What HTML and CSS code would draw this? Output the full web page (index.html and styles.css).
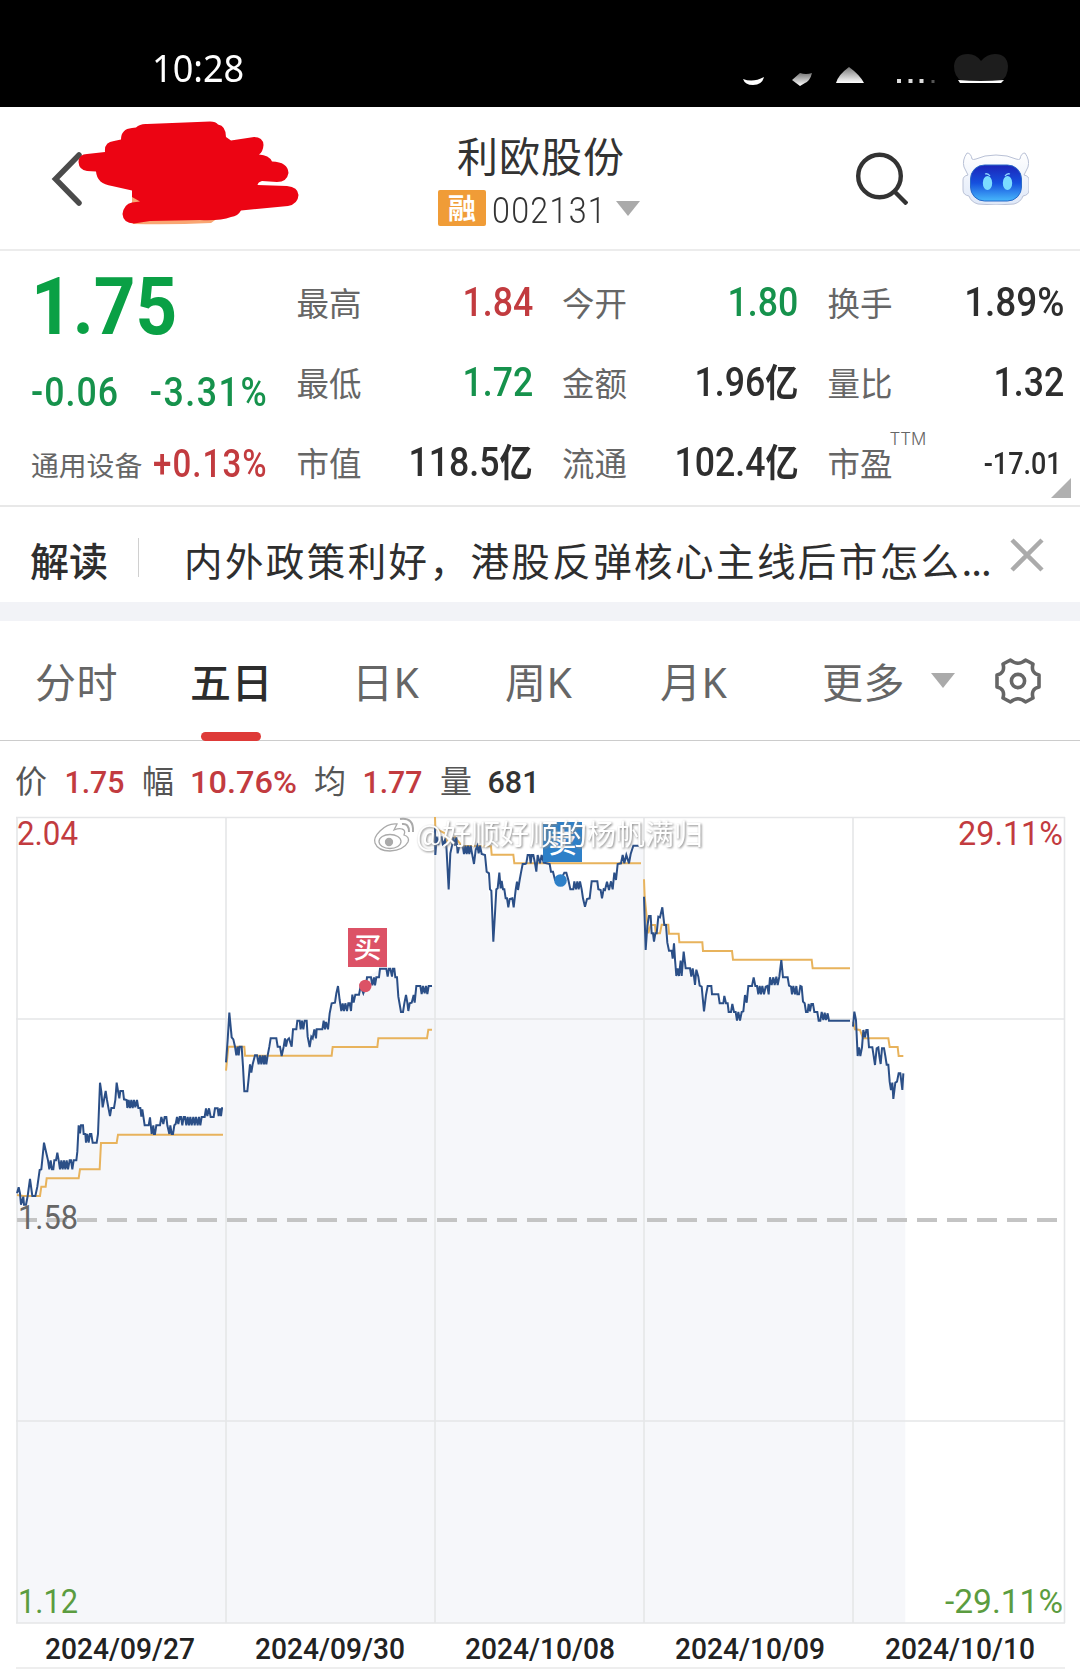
FILE: index.html
```html
<!DOCTYPE html>
<html lang="zh-CN">
<head>
<meta charset="utf-8">
<title>利欧股份 002131</title>
<link rel="stylesheet" href="styles.css">
</head>
<body>
<div class="status">
  <span class="clock">10:28</span>
  <svg class="status-icons" width="280" height="40" viewBox="728 50 280 40">
    <defs><linearGradient id="fade" x1="0" y1="0" x2="0" y2="1"><stop offset="0" stop-color="#777"/><stop offset="1" stop-color="#fff"/></linearGradient></defs>
    <path d="M743 79q10 4 21-2q-2 8-11 8q-8 0-10-6z" fill="#fff"/>
    <path d="M792 80l8-7q6 2 12 0q-2 8-7 10l-5 3z" fill="url(#fade)"/>
    <path d="M836 83q2-8 13-16q11 8 15 16z" fill="url(#fade)"/>
    <path d="M897 79h4v4h-4zM908.500 79h4v4h-4zM919.500 79h4v4h-4z" fill="#ddd"/>
    <path d="M931.500 80h3v3h-3z" fill="#555"/>
    <path d="M954 66q1-12 14-12q8 0 13 7q6-7 14-7q12 0 13 12q0 12-8 15h-38q-8-4-8-15z" fill="#1d1d1d"/>
    <path d="M958 80q22 2 46 0l-3 3h-41z" fill="#fff"/>
  </svg>
</div>

<header class="header">
  <svg class="back" width="250" height="110" viewBox="50 118 250 110">
    <path d="M79 155L55.500 179L79 203" fill="none" stroke="#4b4b4b" stroke-width="5.500" stroke-linecap="round"/>
    <path d="M132 192l16 14l-16-2zM130 218h88l-7 5q-40 2-78 1z" fill="#f9a673"/>
    <path d="M78.500 162Q79 154 87 154L105 152Q104 142 114 141L121 139.500Q121 129 132 128L136 127.500Q140 123.500 147 124L185 122.500L210 121.500Q216 121.500 218 124.500Q226 126 226 137L231 140.500L254 137Q263 137 263.500 145Q263 152 259 154.500Q269 155 272 161.500Q288 162 288.500 173Q287 182 277 182L262 181Q258 182 257.500 185L287 186Q298 187 298.500 195Q298 204 288 206L241 210.500Q238 216 231 217Q220 221 200 220L150 221L134 223.500Q123 223 122.500 214Q124 204 132 202.500L140 201.500L132 197V190.500L112 186Q97 184 96 171.500L87 171Q79 170 78.500 162Z" fill="#ec0413"/>
  </svg>
  <div class="stock">
    <div class="stock-name">利欧股份</div>
    <div class="stock-code"><span class="badge">融</span><span class="code">002131</span><i class="caret"></i></div>
  </div>
  <div class="actions">
    <svg width="56" height="56" viewBox="852 149 56 56"><circle cx="879.500" cy="176" r="21.300" fill="none" stroke="#333" stroke-width="4.400"/><path d="M894 191l13 13" stroke="#333" stroke-width="4.400"/></svg>
    <svg width="68" height="56" viewBox="960 149 68 56">
      <defs>
        <linearGradient id="face" x1="0" y1="0" x2="0" y2="1"><stop offset="0" stop-color="#1c24b8"/><stop offset=".5" stop-color="#1550de"/><stop offset="1" stop-color="#47b8fb"/></linearGradient>
        <linearGradient id="shell" x1="0" y1="0" x2="0" y2="1"><stop offset="0" stop-color="#fff"/><stop offset="1" stop-color="#dfe8f8"/></linearGradient>
      </defs>
      <path d="M966 153q4 0 5 6q1 1 4 0q8-4 20-4t20 4q3 1 4 0q1-6 5-6q5 7 3 14l-4 8q5 1 5 5v10q0 5-6 6q-2 6-9 8q-18 2-36 0q-7-2-9-8q-6-1-6-6v-10q0-4 5-5l-4-8q-2-7 3-14z" fill="url(#shell)" stroke="#b9c1d6"/>
      <rect x="969.500" y="165" width="51" height="36" rx="14" fill="url(#face)" stroke="#2869c9"/>
      <ellipse cx="986.500" cy="183" rx="4.700" ry="7" fill="#7bdcff"/><ellipse cx="1006.500" cy="183" rx="4.700" ry="7" fill="#7bdcff"/>
      <path d="M984 174q3-1 5 2M1004 176q2-3 5-2" fill="none" stroke="#8fd6ff" stroke-width="1.300"/>
    </svg>
  </div>
</header>

<section class="quote">
  <div class="col main down">
    <div class="price"><b class="num">1.75</b></div>
    <div class="change"><span class="num left">-0.06</span><span class="num wide">-3.31%</span></div>
    <div class="sector"><span>通用设备</span><span class="num up">+0.13%</span></div>
  </div>
  <div class="col">
    <div class="cell"><span>最高</span><span class="num up">1.84</span></div>
    <div class="cell"><span>最低</span><span class="num down">1.72</span></div>
    <div class="cell"><span>市值</span><span class="num">118.5<em>亿</em></span></div>
  </div>
  <div class="col">
    <div class="cell"><span>今开</span><span class="num down">1.80</span></div>
    <div class="cell"><span>金额</span><span class="num">1.96<em>亿</em></span></div>
    <div class="cell"><span>流通</span><span class="num">102.4<em>亿</em></span></div>
  </div>
  <div class="col">
    <div class="cell"><span>换手</span><span class="num percent">1.89%</span></div>
    <div class="cell"><span>量比</span><span class="num">1.32</span></div>
    <div class="cell pe"><span>市盈<sup>TTM</sup></span><span class="num small">-17.01</span></div>
  </div>
  <i class="corner"></i>
</section>

<section class="news">
  <b>解读</b>
  <span class="news-text">内外政策利好，港股反弹核心主线后市怎么<span class="dots">...</span></span>
  <svg width="34" height="34" viewBox="0 0 34 34"><path d="M2 2l30 30M32 2L2 32" stroke="#ababab" stroke-width="4.500"/></svg>
</section>

<nav class="tabs">
  <span>分时</span>
  <span class="active">五日</span>
  <span>日<i>K</i></span>
  <span>周<i>K</i></span>
  <span>月<i>K</i></span>
  <span class="more">更多</span>
  <i class="caret"></i>
  <svg class="gear" width="48" height="48" viewBox="-24 -24 48 48" fill="none" stroke="#666" stroke-width="3.600" stroke-linejoin="round">
    <path d="M-7.500 -21Q0 -14.500 7.500 -21L15 -17Q12.500 -8 21 -6V6Q12.500 8 15 17L7.500 21Q0 14.500 -7.500 21L-15 17Q-12.500 8 -21 6V-6Q-12.500 -8 -15 -17Z"/><circle r="6.600"/>
  </svg>
</nav>

<svg class="chart" width="1080" height="928" viewBox="0 741 1080 928">
  <g class="info">
    <text class="cn" x="15" y="793">价</text><text class="up" x="64.500" y="793" textLength="60" lengthAdjust="spacingAndGlyphs">1.75</text>
    <text class="cn" x="142" y="793">幅</text><text class="up" x="190" y="793" textLength="107" lengthAdjust="spacingAndGlyphs">10.76%</text>
    <text class="cn" x="314" y="793">均</text><text class="up" x="362.500" y="793" textLength="60" lengthAdjust="spacingAndGlyphs">1.77</text>
    <text class="cn" x="440" y="793">量</text><text class="vol" x="487.500" y="793" textLength="52" lengthAdjust="spacingAndGlyphs">681</text>
  </g>

  <!-- shaded area under the price line, one block per trading day -->
  <g class="area">
    <path transform="translate(0 980) scale(.33333)" d="M51 1929V640L56 622L63 674H78L90 597L97 648H106L119 570L132 488L148 568L172 541L229 541L236 436H249L258 488H290L300 308L308 382L317 333L330 408L342 384L350 308L358 333H369L380 360H411L434 436L455 462L484 411H499L508 462H519L531 411H614L618 385H678V1929Z"/>
    <path transform="translate(215 900) scale(.33333)" d="M33 2169V487L43 338L60 440H80L88 574H97L105 493L120 466H158L167 415H184L200 468L217 415H230L234 388L247 362H275L284 441L298 388H339L350 310L369 258L379 333H408L432 284L456 232L495 206H538L546 232L558 336H564L577 285L590 308L604 258H660V2169Z"/>
    <path transform="translate(425 800) scale(.33333)" d="M30 2469V137H60L71 268L81 137H170L185 215L205 425L223 218L250 322H266L276 245L293 192L308 165H350L378 215L405 243L424 218L436 268H470L480 320H486L500 244H517L531 295L558 244L568 218L593 165L625 137H657V2469Z"/>
    <path transform="translate(635 800) scale(.33333)" d="M27 2469V290L32 450L42 348L57 425L82 322L102 452L124 528L146 455L152 505H173L200 560L207 634L218 558H229L254 610H278L306 662H315L340 558H356L370 583H401L439 480L444 532H458L471 583L500 560L513 636H547L560 662H655L658 635L668 768L685 690H698L702 742L720 795L747 745L760 794L775 897L791 820H811V2469Z"/>
  </g>

  <g class="grid">
    <path d="M16 817.500H1065M16 1019H1065M16 1421H1065M16 1623H1065M17 817V1623M226 817V1623M435 817V1623M644 817V1623M853 817V1623M1064.500 817V1623"/>
    <path class="foot" d="M16 1668H1065"/>
  </g>
  <path class="base" d="M17 1220H1060"/>

  <g class="avg">
    <polyline transform="translate(0 980) scale(.33333)" points="51,645 70,648 120,648 124,620 137,620 140,595 236,595 240,568 299,568 303,489 350,489 354,464 669,464"/>
    <polyline transform="translate(215 900) scale(.33333)" points="33,512 40,440 88,440 90,467 350,467 353,441 487,441 490,415 636,415 640,389 651,389"/>
    <polyline transform="translate(425 800) scale(.33333)" points="30,51 31,85 60,100 65,125 90,112 110,137 198,139 200,164 265,164 268,190 648,190"/>
    <polyline transform="translate(635 800) scale(.33333)" points="27,238 29,290 40,400 47,375 60,375 62,400 75,400 80,374 100,374 102,401 131,401 133,427 202,427 204,453 291,453 294,479 530,479 533,505 645,505"/>
    <polyline transform="translate(635 800) scale(.33333)" points="654,665 660,688 675,690 684,715 760,715 764,741 788,741 791,768 805,768"/>
  </g>

  <g class="line">
    <polyline transform="translate(0 980) scale(.33333)" points="51,640 56,622 60,640 63,674 70,650 72,674 78,674 83,648 90,597 97,648 106,648 112,620 119,570 124,568 132,488 138,515 144,541 148,568 152,541 156,568 160,568 163,541 168,541 172,518 176,541 180,568 184,541 188,568 192,541 196,568 200,541 204,568 209,541 213,541 217,568 221,541 229,541 232,515 236,436 240,460 243,436 249,436 251,462 256,462 258,488 262,462 266,488 270,462 274,462 278,488 290,488 294,462 300,308 304,335 308,382 312,360 317,333 321,360 325,382 330,408 334,384 342,384 346,360 350,308 354,333 358,355 361,333 369,333 372,358 380,360 382,384 386,360 390,384 394,360 398,384 402,360 406,382 411,360 415,384 421,384 424,410 427,388 434,436 446,436 450,412 455,462 460,436 462,462 465,462 469,436 480,436 484,411 490,432 494,411 499,411 502,436 508,462 511,436 515,462 519,462 523,436 527,432 531,411 535,432 539,411 543,411 547,436 551,411 555,411 559,436 563,411 567,436 571,411 575,436 580,411 584,436 588,411 593,436 597,411 601,436 605,411 614,411 618,385 622,408 627,385 632,411 641,411 645,385 653,385 656,408 660,385 663,408 666,385 669,385"/>
    <polyline transform="translate(215 900) scale(.33333)" points="33,487 38,420 43,338 50,412 55,418 60,440 64,466 68,440 71,466 74,440 80,440 84,500 88,574 97,574 101,535 105,493 109,518 113,493 120,466 126,466 131,493 135,466 139,493 143,466 147,493 150,466 154,493 158,466 163,440 167,415 184,415 188,440 195,440 200,468 206,440 210,415 213,440 217,420 222,415 230,440 234,388 244,388 247,362 254,362 257,388 261,362 265,388 269,362 275,362 278,410 284,441 289,410 293,415 298,388 303,415 305,388 322,388 326,362 330,388 333,366 339,388 344,340 350,310 360,308 364,280 369,258 374,300 379,333 383,310 387,333 391,310 396,333 400,310 404,310 408,333 412,284 416,308 421,284 432,284 437,258 445,280 453,258 456,232 468,232 472,256 477,232 480,256 484,232 492,232 495,206 514,206 518,230 522,206 526,206 531,230 534,206 538,206 541,232 546,232 550,290 558,336 564,336 568,310 573,285 577,308 580,333 584,310 590,308 596,285 599,308 604,258 616,258 620,282 624,258 629,280 633,258 637,282 641,258 651,258"/>
    <polyline transform="translate(425 800) scale(.33333)" points="30,80 31,165 35,110 40,135 44,112 50,112 54,137 60,120 64,137 71,268 76,160 81,137 85,112 90,137 94,112 98,160 103,137 113,137 117,162 121,137 125,162 129,137 133,162 137,137 141,160 147,192 152,150 157,137 161,160 165,137 170,162 180,165 185,215 192,220 195,268 199,272 205,425 210,340 214,268 218,265 223,218 227,265 230,243 234,268 238,268 242,295 246,295 250,322 254,297 262,295 266,322 272,270 276,245 279,270 284,240 288,218 293,192 300,192 304,190 308,165 314,165 317,190 320,165 325,165 330,190 334,215 338,165 345,190 350,165 356,188 365,190 374,192 378,215 384,215 390,240 405,243 412,230 418,218 424,218 430,240 436,268 445,268 448,244 453,268 457,244 461,268 465,244 470,268 474,295 480,320 486,297 494,295 500,244 517,244 520,268 527,270 531,295 536,268 540,270 546,245 552,270 558,244 563,268 568,218 573,240 578,192 588,190 593,165 598,190 604,165 612,190 617,162 625,137 648,137"/>
    <polyline transform="translate(635 800) scale(.33333)" points="27,290 32,450 37,378 42,348 47,348 50,400 54,400 57,425 61,400 65,400 70,350 75,352 82,322 88,375 93,375 97,428 102,452 110,452 113,476 117,430 120,478 124,528 128,505 132,528 137,482 140,528 146,455 152,505 165,505 169,530 173,505 177,530 180,555 184,509 190,530 194,557 200,560 207,634 213,585 218,558 229,558 231,583 250,583 254,610 265,610 268,588 273,610 278,610 281,636 288,636 292,612 297,636 302,636 306,662 310,636 315,662 320,636 325,634 330,585 335,608 340,558 351,558 356,532 361,558 366,558 370,583 374,558 378,583 382,558 387,583 392,560 397,558 401,583 405,532 410,555 415,532 419,555 424,530 428,555 433,530 439,480 444,532 458,532 462,557 468,560 471,583 475,558 480,583 484,558 487,583 492,583 496,558 500,560 504,605 509,610 513,636 518,636 521,612 525,634 529,612 534,612 538,636 547,636 551,662 556,662 560,636 565,660 569,638 573,660 578,640 582,662 645,662"/>
    <polyline transform="translate(635 800) scale(.33333)" points="654,680 658,635 663,660 668,768 672,742 676,768 681,742 685,690 690,712 694,690 698,690 702,742 712,742 716,768 720,795 725,745 730,742 733,768 737,792 741,745 747,745 751,768 755,794 760,794 764,845 768,870 772,848 775,897 781,848 786,845 791,820 796,820 799,845 802,870 805,820"/>
  </g>

  <g class="axis">
    <text class="up" x="17" y="845" textLength="61" lengthAdjust="spacingAndGlyphs">2.04</text>
    <text class="up" x="958" y="845" textLength="105" lengthAdjust="spacingAndGlyphs">29.11%</text>
    <text class="mid" x="18" y="1229" textLength="60" lengthAdjust="spacingAndGlyphs">1.58</text>
    <text class="low" x="18" y="1613" textLength="60" lengthAdjust="spacingAndGlyphs">1.12</text>
    <text class="low" x="945" y="1613" textLength="118" lengthAdjust="spacingAndGlyphs">-29.11%</text>
  </g>

  <rect x="348" y="928" width="39" height="39" fill="#dc5266"/>
  <text class="mark" x="367.500" y="958" text-anchor="middle">买</text>
  <circle cx="365.300" cy="986" r="6.200" fill="#dc5266"/>
  <rect x="543" y="822" width="39" height="40" fill="#2e80c8"/>
  <text class="mark" x="562.500" y="853" text-anchor="middle">卖</text>
  <circle cx="560.500" cy="880.500" r="6.300" fill="#2e80c8"/>

  <g class="watermark">
    <g fill="#fff" stroke="#aaa" stroke-width="1.300">
      <path d="M397 824q-9-1-17 7q-7 7-5 12q3 8 15 8q14-1 18-9q2-5-4-7q2-5-2-6q-3-1-8 1q2-4 3-6z"/>
      <ellipse cx="390" cy="841.500" rx="11" ry="7"/>
      <circle cx="389" cy="842" r="3.500" fill="#aaa"/>
      <path d="M402 824q7-1 7 8M400 819q14-2 13 13" fill="none" stroke-width="2"/>
    </g>
    <text x="416" y="845" textLength="287" lengthAdjust="spacingAndGlyphs">@好顺好顺的杨帆满归</text>
  </g>

  <g class="dates">
    <text x="45" y="1659" textLength="150" lengthAdjust="spacingAndGlyphs">2024/09/27</text>
    <text x="255" y="1659" textLength="150" lengthAdjust="spacingAndGlyphs">2024/09/30</text>
    <text x="465" y="1659" textLength="150" lengthAdjust="spacingAndGlyphs">2024/10/08</text>
    <text x="675" y="1659" textLength="150" lengthAdjust="spacingAndGlyphs">2024/10/09</text>
    <text x="885" y="1659" textLength="150" lengthAdjust="spacingAndGlyphs">2024/10/10</text>
  </g>
</svg>
</body>
</html>
```
FILE: styles.css
```css
* { box-sizing: border-box; }
body {
  margin: 0;
  width: 1080px;
  height: 1669px;
  overflow: hidden;
  background: #fff;
  color: #2e2e2e;
  font-family: "Noto Sans CJK SC", sans-serif;
}
svg { display: block; flex: none; }
i, em { font-style: normal; }

.status {
  height: 107px;
  background: #000;
  display: flex;
  justify-content: space-between;
  padding: 50px 72px 0 152px;
}
.clock {
  color: #fff;
  font: 38px/34px "Noto Sans", sans-serif;
  transform: scaleX(.95);
  transform-origin: left;
}

.header {
  height: 144px;
  border-bottom: 2px solid #ececec;
  display: grid;
  grid-template-columns: 388px 1fr 228px;
  padding-left: 50px;
}
.back { margin-top: 11px; }
.stock { padding-top: 23px; }
.stock-name {
  font-size: 41px;
  line-height: 48px;
  letter-spacing: 1px;
  padding-left: 19px;
  color: #333;
}
.stock-code { display: flex; align-items: center; height: 40px; margin-top: 10px; }
.badge {
  width: 48px;
  height: 36px;
  border-radius: 2px;
  background: #f09c37;
  color: #fff;
  font-size: 28px;
  font-weight: 700;
  line-height: 35px;
  text-align: center;
}
.code {
  width: 112px;
  margin-left: 6px;
  padding-top: 6px;
  font: 300 37px/40px Roboto, sans-serif;
  letter-spacing: 1.500px;
  transform: scaleX(.87);
  transform-origin: left;
  color: #333;
}
.caret {
  border: 12px solid transparent;
  border-top: 15px solid #aaa;
  border-bottom: 0;
}
.stock-code .caret { margin-left: 12px; }
.actions { display: flex; padding-top: 42px; gap: 53px; }

.quote {
  position: relative;
  height: 256px;
  border-bottom: 2px solid #e8e8e8;
  display: grid;
  grid-template-columns: repeat(4, 1fr);
  gap: 30px;
  padding: 10px 17px 0 31px;
}
.num {
  font: 500 41px/46px Roboto, "Noto Sans CJK SC", sans-serif;
  transform: scaleX(.87);
  transform-origin: right;
  white-space: nowrap;
}
.num em { display: inline-block; font: 700 38px/40px "Noto Sans CJK SC", sans-serif; }
.up { color: #c23b3f; fill: #c23b3f; }
.down { color: #16924c; }
.cell { display: flex; justify-content: space-between; align-items: center; height: 80px; }
.cell > span:first-child { font-size: 32.500px; color: #666; }
.cell .num { padding-top: 2px; margin-right: -1px; }
.cell .percent { transform: scaleX(.9); }
.cell .small { font-size: 31px; padding: 5px 0 0; margin-right: 1px; }
.price { height: 90px; display: flex; align-items: center; }
.price .num { font-size: 79px; font-weight: 700; line-height: 90px; padding-top: 2px; color: #0aa045; transform: scaleX(.92); transform-origin: left; }
.change { display: flex; justify-content: space-between; align-items: center; height: 82px; }
.change .left { transform-origin: left; letter-spacing: 1.200px; }
.change .wide { letter-spacing: 1.800px; margin-right: -2px; }
.sector { display: flex; justify-content: space-between; align-items: center; height: 62px; }
.sector > span:first-child { font-size: 27.800px; color: #666; flex: none; }
.sector .num { font-size: 38px; letter-spacing: 1.200px; margin: 0 -1px 0 -30px; }
.pe { position: relative; }
.pe sup { position: absolute; left: 62px; top: 8px; font: 300 17px/20px Inter, sans-serif; }
.corner {
  position: absolute;
  right: 9px;
  bottom: 7px;
  border-left: 20px solid transparent;
  border-bottom: 20px solid #b0b0b0;
}

.news {
  height: 114px;
  border-bottom: 19px solid #f2f3f7;
  display: flex;
  align-items: center;
  padding: 6px 0 0 30px;
}
.news b { font-size: 39px; font-weight: 500; width: 109px; height: 39px; line-height: 43px; border-right: 1px solid #d0d0d0; }
.news-text { margin-left: 45px; font-size: 38.500px; letter-spacing: 2.420px; width: 823px; white-space: nowrap; height: 60px; line-height: 63px; }
.dots { letter-spacing: -1px; }
.news svg { margin-bottom: 5px; margin-left: 3px; }

.tabs {
  height: 120px;
  border-bottom: 1px solid #ccc;
  display: grid;
  grid-template-columns: 155px 162px 153px 155px 162px 109px 24px 39px 48px;
  padding-left: 35px;
  align-items: center;
  color: #666;
  font-size: 41px;
}
.tabs span { height: 120px; line-height: 118px; letter-spacing: .5px; }
.tabs span i { font-family: "Noto Sans", sans-serif; font-weight: 400; }
.tabs .active { color: #2d2d2d; font-weight: 500; position: relative; }
.active::after {
  content: "";
  position: absolute;
  left: 11px;
  bottom: 0;
  width: 60px;
  height: 9px;
  border-radius: 5px;
  background: #de3a38;
}
.tabs .caret { margin-top: -1px; }
.gear { grid-column: 9; }

.chart text { font-family: Roboto, "Noto Sans CJK SC", sans-serif; }
.info text { font-size: 32px; font-weight: 500; }
.info .cn { font-size: 32px; font-weight: 400; fill: #555; }
.info .vol { fill: #333; }
.area { fill: #f6f7fa; }
.grid { fill: none; stroke: #e5e6e8; stroke-width: 1.600; }
.foot { stroke: #e8e8e8; }
.base { stroke: #c4c4c4; stroke-width: 4; stroke-dasharray: 20 10; }
.avg, .line { fill: none; stroke-width: 2; }
.avg { stroke: #e8b35c; }
.line { stroke: #2b4f87; }
.avg *, .line * { vector-effect: non-scaling-stroke; }
.axis text { font-size: 33.500px; font-weight: 450; }
.axis .mid { fill: #666; }
.axis .low { fill: #5b9c40; }
.mark { font-size: 28px; font-weight: 500; fill: #fff; }
.watermark text { font-size: 28.500px; fill: #fff; filter: drop-shadow(1px 1px 1px #888); }
.dates text { font-size: 29px; font-weight: 500; fill: #222; }
```
